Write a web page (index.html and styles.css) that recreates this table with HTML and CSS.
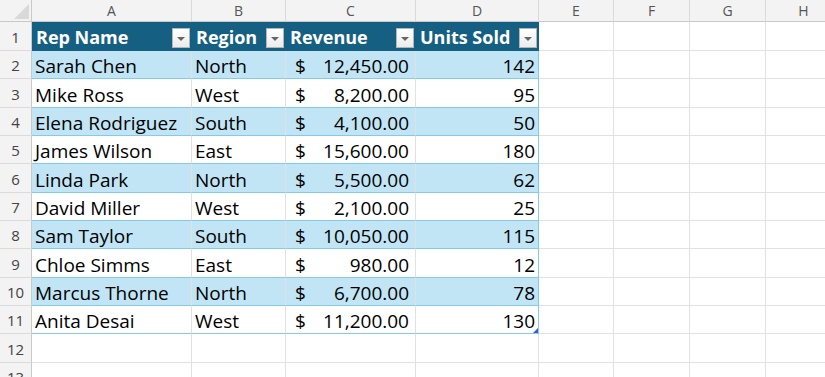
FILE: index.html
```html
<!DOCTYPE html>
<html lang="en">
<head>
<meta charset="utf-8">
<title>Sales table</title>
<link rel="stylesheet" href="styles.css">
</head>
<body>
<table class="sheet">
  <colgroup>
    <col class="w-rh"><col class="w-a"><col class="w-b"><col class="w-c"><col class="w-d"><col class="w-e"><col class="w-f"><col class="w-g"><col class="w-h">
  </colgroup>
  <tr class="h22">
    <th class="corner"><span class="tri"></span></th>
    <th class="ch">A</th><th class="ch">B</th><th class="ch">C</th><th class="ch">D</th><th class="ch">E</th><th class="ch">F</th><th class="ch">G</th><th class="ch">H</th>
  </tr>
  <tr class="h29 thead">
    <td class="rh">1</td>
    <td class="th"><div class="hcell"><span>Rep Name</span><span class="dd"><span class="arrow"></span></span></div></td>
    <td class="th"><div class="hcell"><span>Region</span><span class="dd"><span class="arrow"></span></span></div></td>
    <td class="th"><div class="hcell"><span>Revenue</span><span class="dd"><span class="arrow"></span></span></div></td>
    <td class="th last"><div class="hcell"><span>Units Sold</span><span class="dd"><span class="arrow"></span></span></div></td>
    <td class="g"></td><td class="g"></td><td class="g"></td><td class="g"></td>
  </tr>
  <tr class="h28 band">
    <td class="rh">2</td><td class="tx">Sarah Chen</td><td class="tx">North</td>
    <td class="tx"><div class="acc"><span>$</span><span>12,450.00</span></div></td><td class="tx num last">142</td>
    <td class="g"></td><td class="g"></td><td class="g"></td><td class="g"></td>
  </tr>
  <tr class="h29">
    <td class="rh">3</td><td class="tx">Mike Ross</td><td class="tx">West</td>
    <td class="tx"><div class="acc"><span>$</span><span>8,200.00</span></div></td><td class="tx num last">95</td>
    <td class="g"></td><td class="g"></td><td class="g"></td><td class="g"></td>
  </tr>
  <tr class="h28 band">
    <td class="rh">4</td><td class="tx">Elena Rodriguez</td><td class="tx">South</td>
    <td class="tx"><div class="acc"><span>$</span><span>4,100.00</span></div></td><td class="tx num last">50</td>
    <td class="g"></td><td class="g"></td><td class="g"></td><td class="g"></td>
  </tr>
  <tr class="h28">
    <td class="rh">5</td><td class="tx">James Wilson</td><td class="tx">East</td>
    <td class="tx"><div class="acc"><span>$</span><span>15,600.00</span></div></td><td class="tx num last">180</td>
    <td class="g"></td><td class="g"></td><td class="g"></td><td class="g"></td>
  </tr>
  <tr class="h29 band">
    <td class="rh">6</td><td class="tx">Linda Park</td><td class="tx">North</td>
    <td class="tx"><div class="acc"><span>$</span><span>5,500.00</span></div></td><td class="tx num last">62</td>
    <td class="g"></td><td class="g"></td><td class="g"></td><td class="g"></td>
  </tr>
  <tr class="h28">
    <td class="rh">7</td><td class="tx">David Miller</td><td class="tx">West</td>
    <td class="tx"><div class="acc"><span>$</span><span>2,100.00</span></div></td><td class="tx num last">25</td>
    <td class="g"></td><td class="g"></td><td class="g"></td><td class="g"></td>
  </tr>
  <tr class="h28 band">
    <td class="rh">8</td><td class="tx">Sam Taylor</td><td class="tx">South</td>
    <td class="tx"><div class="acc"><span>$</span><span>10,050.00</span></div></td><td class="tx num last">115</td>
    <td class="g"></td><td class="g"></td><td class="g"></td><td class="g"></td>
  </tr>
  <tr class="h29">
    <td class="rh">9</td><td class="tx">Chloe Simms</td><td class="tx">East</td>
    <td class="tx"><div class="acc"><span>$</span><span>980.00</span></div></td><td class="tx num last">12</td>
    <td class="g"></td><td class="g"></td><td class="g"></td><td class="g"></td>
  </tr>
  <tr class="h28 band">
    <td class="rh">10</td><td class="tx">Marcus Thorne</td><td class="tx">North</td>
    <td class="tx"><div class="acc"><span>$</span><span>6,700.00</span></div></td><td class="tx num last">78</td>
    <td class="g"></td><td class="g"></td><td class="g"></td><td class="g"></td>
  </tr>
  <tr class="h28">
    <td class="rh">11</td><td class="tx">Anita Desai</td><td class="tx">West</td>
    <td class="tx"><div class="acc"><span>$</span><span>11,200.00</span></div></td><td class="tx num last handle-cell">130<span class="handle"></span></td>
    <td class="g"></td><td class="g"></td><td class="g"></td><td class="g"></td>
  </tr>
  <tr class="h29">
    <td class="rh">12</td><td class="g"></td><td class="g"></td><td class="g"></td><td class="g"></td><td class="g"></td><td class="g"></td><td class="g"></td><td class="g"></td>
  </tr>
  <tr class="h28">
    <td class="rh">13</td><td class="g"></td><td class="g"></td><td class="g"></td><td class="g"></td><td class="g"></td><td class="g"></td><td class="g"></td><td class="g"></td>
  </tr>
</table>
</body>
</html>
```
FILE: styles.css
```css
html, body {
  margin: 0;
  padding: 0;
  background: #ffffff;
  overflow: hidden;
}

.sheet {
  border-collapse: separate;
  border-spacing: 0;
  table-layout: fixed;
  width: 842px;
  font-family: "Open Sans", "Liberation Sans", sans-serif;
}

.w-rh { width: 32px; }
.w-a { width: 160px; }
.w-b { width: 94px; }
.w-c { width: 130px; }
.w-d { width: 123px; }
.w-e { width: 75px; }
.w-f { width: 76px; }
.w-g { width: 76px; }
.w-h { width: 76px; }

.sheet th, .sheet td {
  box-sizing: border-box;
  padding: 0;
  border-right: 1px solid #e1e1e1;
  border-bottom: 1px solid #e1e1e1;
  overflow: hidden;
  white-space: nowrap;
}

.h22 > * { height: 22px; }
.h28 > * { height: 28px; }
.h29 > * { height: 29px; }

/* column letters */
.ch {
  background: #f3f3f3;
  color: #555555;
  font-weight: 400;
  font-size: 14px;
  line-height: 20px;
  text-align: center;
  vertical-align: middle;
  border-right-color: #dadada !important;
  border-bottom-color: #c9c9c9 !important;
}

.corner {
  background: #f3f3f3;
  position: relative;
  border-right-color: #c9c9c9 !important;
  border-bottom-color: #c9c9c9 !important;
}
.tri {
  position: absolute;
  right: 2px;
  bottom: 2px;
  width: 15px;
  height: 15px;
  background: #d9d9d9;
  clip-path: polygon(100% 0, 100% 100%, 0 100%);
}

/* row numbers */
.rh {
  background: #f3f3f3;
  color: #444444;
  font-size: 15px;
  line-height: 18px;
  text-align: center;
  vertical-align: bottom;
  padding-bottom: 4px !important;
  border-right-color: #c9c9c9 !important;
  border-bottom-color: #dadada !important;
}

/* header row of the table */
.th {
  background: #156082;
  color: #ffffff;
  font-weight: 700;
  font-size: 18px;
  line-height: 22px;
  vertical-align: bottom;
  border-right-color: #156082 !important;
  border-bottom-color: #156082 !important;
}
.hcell {
  display: flex;
  justify-content: space-between;
  align-items: flex-end;
  padding: 0 1px 2px 4px;
}
.dd {
  flex: none;
  width: 18px;
  height: 20px;
  box-sizing: border-box;
  background: linear-gradient(#ffffff, #ececec);
  border: 1px solid #b5b5b5;
  display: flex;
  align-items: center;
  justify-content: center;
}
.arrow {
  width: 0;
  height: 0;
  border-left: 4px solid transparent;
  border-right: 4px solid transparent;
  border-top: 4px solid #666666;
  margin-top: 1px;
}

/* body cells */
.tx {
  color: #000000;
  font-size: 19px;
  line-height: 20px;
  vertical-align: bottom;
  padding: 0 0 2px 3px !important;
  border-bottom-color: #83caeb !important;
}
.band .tx { background: #c1e5f5; }
.tx.num {
  text-align: right;
  padding: 0 3px 2px 0 !important;
}
.last { border-right-color: #83caeb !important; }
.th.last { border-right-color: #156082 !important; }

.acc {
  display: flex;
  justify-content: space-between;
  padding: 0 6px 0 6px;
}

.handle-cell { position: relative; }
.handle {
  position: absolute;
  right: 0;
  bottom: 0;
  width: 5px;
  height: 5px;
  background: #3c5dcc;
  clip-path: polygon(100% 0, 100% 100%, 0 100%);
}
```
